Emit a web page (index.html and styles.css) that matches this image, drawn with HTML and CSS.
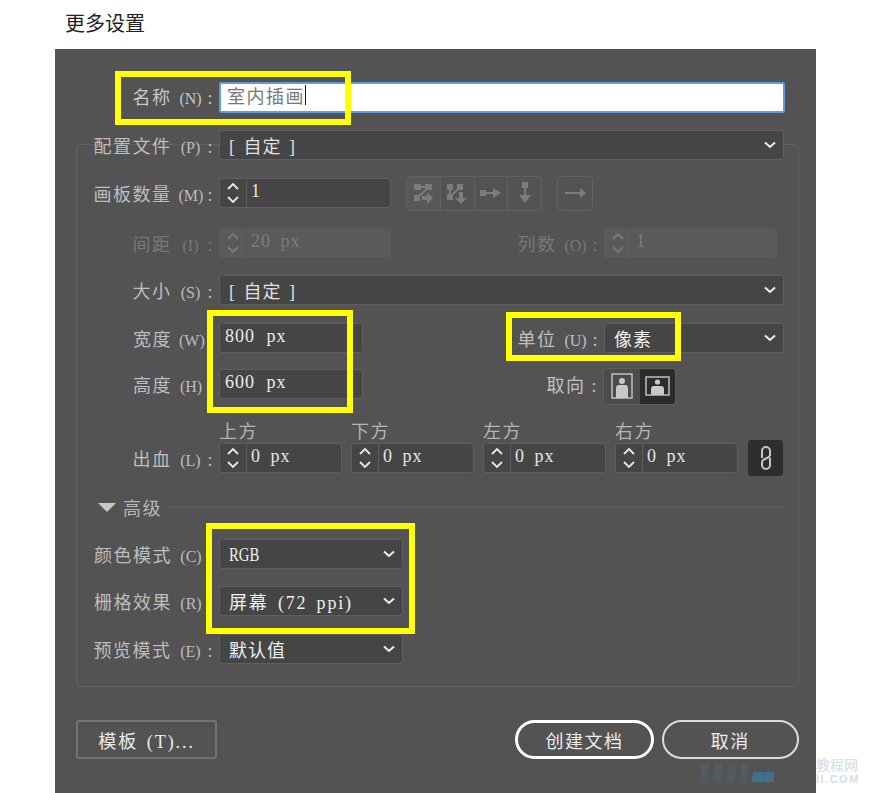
FILE: index.html
```html
<!DOCTYPE html>
<html lang="zh">
<head>
    <meta charset="UTF-8">
    <title>更多设置</title>
    <link rel="stylesheet" href="styles.css">
</head>
<body>
    <svg class="defs" width="0" height="0">
        <symbol id="updown" viewBox="0 0 14 24">
            <path d="M2 8 L7 3 L12 8 M2 16 L7 21 L12 16" fill="none" stroke="currentColor" stroke-width="1.8"/>
        </symbol>
        <symbol id="chev" viewBox="0 0 12 8">
            <path d="M1 1.5 L6 6 L11 1.5" fill="none" stroke="currentColor" stroke-width="2"/>
        </symbol>
    </svg>

    <h1 class="title">更多设置</h1>

    <div class="dialog">
        <!-- name -->
        <div class="row row-name">
            <label class="label">名称<span class="key">(N)</span>:</label>
            <div class="name-input"><span>室内插画</span><i class="caret"></i></div>
        </div>

        <div class="group">
            <div class="row row-first">
                <label class="label">配置文件<span class="key">(P)</span>:</label>
                <div class="field select grow"><span class="bracket">[ 自定 ]</span><svg class="chev"><use href="#chev"/></svg></div>
            </div>

            <div class="row row-count">
                <label class="label">画板数量<span class="key">(M)</span>:</label>
                <div class="field stepper w-172">
                    <span class="step"><svg><use href="#updown"/></svg></span><span class="val">1</span>
                </div>
                <div class="tools">
                    <span class="tool">
                        <svg viewBox="0 0 28 28"><path d="M5 5h7v6H5zM16 5h7v6h-7zM5 16h6v6H5zM13 17h5v-4l6 6-6 6v-4h-5z"/><path class="ln" d="M12 8h4M17 11 L10 17"/></svg>
                    </span>
                    <span class="tool">
                        <svg viewBox="0 0 28 28"><path d="M4 5h6v6H4zM4 15h6v6H4zM14 5h6v6h-6zM16 13h4v6h4l-6 6-6-6h4z"/><path class="ln" d="M7 11v4M15 10 L9 16"/></svg>
                    </span>
                    <span class="tool">
                        <svg viewBox="0 0 28 28"><path d="M3 11h6v6H3zM9 13h7v-4l8 5-8 5v-4H9z"/></svg>
                    </span>
                    <span class="tool">
                        <svg viewBox="0 0 28 28"><path d="M11 3h6v6h-6zM13 9h2v7h5l-6 8-6-8h5z"/></svg>
                    </span>
                </div>
                <span class="tool tool-single">
                    <svg viewBox="0 0 28 28"><path d="M4 13h15v-4l6 5-6 5v-4H4z"/></svg>
                </span>
            </div>

            <div class="row row-space dim">
                <label class="label">间距<span class="key">(I)</span>:</label>
                <div class="field stepper w-172 off">
                    <span class="step"><svg><use href="#updown"/></svg></span><span class="val">20 px</span>
                </div>
                <label class="label label-cols">列数<span class="key">(O)</span>:</label>
                <div class="field stepper w-173 off">
                    <span class="step"><svg><use href="#updown"/></svg></span><span class="val">1</span>
                </div>
            </div>

            <div class="row row-size">
                <label class="label">大小<span class="key">(S)</span>:</label>
                <div class="field select grow"><span class="bracket">[ 自定 ]</span><svg class="chev"><use href="#chev"/></svg></div>
            </div>

            <div class="row row-width">
                <label class="label label-bare">宽度<span class="key">(W)</span></label>
                <div class="field w-144"><span class="val val-plain">800 px</span></div>
                <label class="label label-unit">单位<span class="key">(U)</span>:</label>
                <div class="field select w-180"><span class="strong">像素</span><svg class="chev"><use href="#chev"/></svg></div>
            </div>

            <div class="row row-height">
                <label class="label label-bare">高度<span class="key">(H)</span></label>
                <div class="field w-144"><span class="val val-plain">600 px</span></div>
                <label class="label label-orient">取向 :</label>
                <div class="orient">
                    <span class="orient-btn">
                        <svg viewBox="0 0 22 26" width="22" height="26"><rect x="1" y="1" width="20" height="24" fill="none" stroke="#c8c8c8" stroke-width="1.4"/><circle cx="11" cy="8" r="3" fill="#c8c8c8"/><path d="M5 25v-10q0-3 3-3h6q3 0 3 3v10z" fill="#c8c8c8"/></svg>
                    </span>
                    <span class="orient-btn on">
                        <svg viewBox="0 0 25 20" width="25" height="20"><rect x="1" y="1" width="23" height="18" fill="none" stroke="#c8c8c8" stroke-width="1.4"/><circle cx="12.500" cy="6" r="2.600" fill="#c8c8c8"/><path d="M6 19v-6q0-3 3-3h7q3 0 3 3v6z" fill="#c8c8c8"/></svg>
                    </span>
                </div>
            </div>

            <div class="row row-bleed">
                <label class="label">出血<span class="key">(L)</span>:</label>
                <div class="bleed">
                    <span class="cap">上方</span>
                    <div class="field stepper w-123"><span class="step"><svg><use href="#updown"/></svg></span><span class="val">0 px</span></div>
                </div>
                <div class="bleed">
                    <span class="cap">下方</span>
                    <div class="field stepper w-123"><span class="step"><svg><use href="#updown"/></svg></span><span class="val">0 px</span></div>
                </div>
                <div class="bleed">
                    <span class="cap">左方</span>
                    <div class="field stepper w-123"><span class="step"><svg><use href="#updown"/></svg></span><span class="val">0 px</span></div>
                </div>
                <div class="bleed">
                    <span class="cap">右方</span>
                    <div class="field stepper w-123"><span class="step"><svg><use href="#updown"/></svg></span><span class="val">0 px</span></div>
                </div>
                <span class="link">
                    <svg viewBox="0 0 14 28" width="14" height="28"><path d="M3 14V7a4 4 0 0 1 8 0v4q0 2-4 3.500t-4 3.500v3a4 4 0 0 0 8 0v-7" fill="none" stroke="#c8c8c8" stroke-width="2"/></svg>
                </span>
            </div>

            <div class="adv">
                <i class="tri"></i><span class="adv-text">高级</span><i class="adv-line"></i>
            </div>

            <div class="row row-color">
                <label class="label label-bare">颜色模式<span class="key">(C)</span></label>
                <div class="field select w-184"><span class="strong rgb">RGB</span><svg class="chev"><use href="#chev"/></svg></div>
            </div>
            <div class="row row-raster">
                <label class="label label-bare">栅格效果<span class="key">(R)</span></label>
                <div class="field select w-184"><span class="strong wide">屏幕 (72 ppi)</span><svg class="chev"><use href="#chev"/></svg></div>
            </div>
            <div class="row row-preview">
                <label class="label">预览模式<span class="key">(E)</span>:</label>
                <div class="field select w-184"><span class="strong">默认值</span><svg class="chev"><use href="#chev"/></svg></div>
            </div>
        </div>

        <div class="actions">
            <button class="btn btn-tpl">模板 (T)...</button>
            <button class="btn btn-pill btn-primary">创建文档</button>
            <button class="btn btn-pill">取消</button>
        </div>

        <!-- yellow annotations drawn over the dialog -->
        <div class="mark mark-name"></div>
        <div class="mark mark-size"></div>
        <div class="mark mark-unit"></div>
        <div class="mark mark-color"></div>
    </div>

    <!-- faded watermark -->
    <div class="wm">
        <svg class="wm-logo" viewBox="0 0 78 20" width="78" height="20"><path d="M5 0h8l-3 20H2zM18 0h8l-3 20h-8zM32 0h8l-3 20h-8zM45 0h7l-3 20h-7z" fill="#4f6672" opacity=".45"/><path d="M56 9h10v10H55zM67 9h10v10H66z" fill="#3f7189"/></svg>
        <div class="wm-text"><span>教程网</span><span class="wm-en">II.COM</span></div>
    </div>
</body>
</html>
```

FILE: styles.css
```css
html, body {
    margin: 0;
    height: 793px;
    overflow: hidden;
    background: #fff;
}
body {
    position: relative;
    font-family: "Liberation Serif", "Noto Sans CJK SC", serif;
    color: #c4c4c4;
    font-size: 18px;
}
.defs {
    position: absolute;
}
.title {
    margin: 0;
    height: 49px;
    padding: 9px 0 0 65px;
    box-sizing: border-box;
    font-family: "Noto Sans CJK SC", sans-serif;
    font-size: 20px;
    line-height: 27px;
    font-weight: 400;
    color: #222;
}
.dialog {
    position: relative;
    margin-left: 55px;
    width: 761px;
    height: 744px;
    box-sizing: border-box;
    padding: 33px 17px 0 21px;
    background: #535353;
}
.row {
    display: flex;
    align-items: center;
    height: 30px;
}
.label {
    width: 143px;
    flex: none;
    box-sizing: border-box;
    padding: 4px 5px 0 0;
    text-align: right;
    white-space: nowrap;
    letter-spacing: 1.5px;
    line-height: 30px;
    color: #bdbdbd;
}
.label-bare {
    padding-right: 16px;
}
.key {
    display: inline-block;
    width: 24px;
    margin: 0 5px 0 7px;
    font-size: 16px;
    letter-spacing: 0;
    text-align: center;
}
.label-bare .key {
    margin-right: 0;
}
.row-name {
    height: 31px;
}
.row-name .label {
    padding-top: 2px;
    color: #c8c8c8;
}
.name-input {
    width: 566px;
    height: 31px;
    margin-right: -1px;
    box-sizing: border-box;
    display: flex;
    align-items: center;
    padding: 0 0 6px 6px;
    background: #fff;
    border: 2px solid #5d9ce0;
    border-radius: 2px;
    color: #777;
    letter-spacing: 1.5px;
}
.caret {
    width: 1px;
    height: 20px;
    background: #111;
}

/* group box */
.group {
    margin-top: 31px;
    width: 723px;
    height: 543px;
    box-sizing: border-box;
    border: 1px solid #626262;
    border-radius: 5px;
}
.group .row {
    margin-right: 14px;
    margin-left: -1px;
}
.row-first { margin-top: -15px; }
.row-count { margin-top: 18px; }
.row-space { margin-top: 20px; }
.row-size { margin-top: 17px; }
.row-width { margin-top: 18px; }
.row-height { margin-top: 16px; }
.row-bleed { margin-top: 44px; }
.row-color { margin-top: 0; }
.row-raster { margin-top: 17px; }
.row-preview { margin-top: 18px; }

.field {
    height: 30px;
    box-sizing: border-box;
    display: flex;
    align-items: center;
    flex: none;
    background: #454545;
    border: 1px solid #5f5f5f;
    border-radius: 3px;
    color: #e6e6e6;
    letter-spacing: 1px;
}
.grow { flex: 1; }
.w-144 { width: 144px; }
.w-172 { width: 172px; }
.w-173 { width: 173px; }
.w-180 { width: 180px; }
.w-184 { width: 184px; }
.w-123 { width: 123px; }
.select {
    justify-content: space-between;
    padding: 0 7px 0 9px;
}
.chev {
    width: 12px;
    height: 8px;
    color: #f0f0f0;
    flex: none;
}
.bracket {
    color: #e0e0e0;
    word-spacing: 2px;
}
.strong {
    color: #efefef;
    white-space: nowrap;
    word-spacing: 4px;
}
.rgb {
    letter-spacing: 0;
    padding-top: 3px;
    transform: scaleX(0.82);
    transform-origin: left;
}
.wide {
    letter-spacing: 1.8px;
    word-spacing: 3px;
}
.step {
    width: 26px;
    height: 100%;
    flex: none;
    display: flex;
    align-items: center;
    justify-content: center;
    border-right: 1px solid #5f5f5f;
    color: #e8e8e8;
}
.step svg {
    width: 14px;
    height: 24px;
}
.val {
    padding: 0 0 3px 4px;
    white-space: nowrap;
    word-spacing: 4px;
}
.val-plain {
    padding-left: 5px;
    word-spacing: 6px;
    color: #ececec;
}

/* disabled row */
.dim .label {
    color: #787878;
}
.label-cols {
    margin-left: 77px;
    width: 136px;
}
.off {
    background: #5a5a5a;
    border-color: #5a5a5a;
    color: #7a7a7a;
}
.off .step {
    border-color: #555;
    color: #7a7a7a;
}

.tools {
    margin-left: 15px;
    width: 136px;
    height: 35px;
    display: flex;
    border: 1px solid #616161;
    border-radius: 4px;
    box-sizing: border-box;
}
.tool {
    flex: 1;
    box-sizing: border-box;
    display: flex;
    align-items: center;
    justify-content: center;
    border-left: 1px solid #616161;
}
.tool:first-child {
    border-left: none;
    background: #585858;
}
.tool svg {
    width: 28px;
    height: 28px;
    fill: #7c7c7c;
}
.tool .ln {
    fill: none;
    stroke: #7c7c7c;
    stroke-width: 2;
}
.tool-single {
    flex: none;
    margin-left: 15px;
    width: 36px;
    height: 35px;
    border: 1px solid #616161;
    border-radius: 4px;
}

.label-unit {
    margin-left: 98px;
    color: #c0c0c0;
}
.label-orient {
    margin-left: 97px;
    color: #c0c0c0;
}
.orient {
    height: 37px;
    margin-top: 4px;
    display: flex;
    box-sizing: border-box;
    border: 1px solid #5f5f5f;
    border-radius: 3px;
}
.orient-btn {
    width: 36px;
    display: flex;
    align-items: center;
    justify-content: center;
    background: #4c4c4c;
}
.orient-btn.on {
    width: 35px;
    background: #2c2c2c;
    border-radius: 0 3px 3px 0;
}

.bleed {
    position: relative;
    margin-right: 9px;
}
.cap {
    position: absolute;
    left: 0;
    top: -22px;
    line-height: 22px;
    letter-spacing: 1.5px;
    color: #b4b4b4;
}
.link {
    margin-left: 1px;
    width: 35px;
    height: 36px;
    display: flex;
    align-items: center;
    justify-content: center;
    background: #2e2e2e;
    border-radius: 3px;
}

.adv {
    display: flex;
    align-items: center;
    height: 30px;
    margin: 19px 14px 17px 21px;
    color: #b8b8b8;
}
.tri {
    width: 0;
    height: 0;
    border-left: 9px solid transparent;
    border-right: 9px solid transparent;
    border-top: 9px solid #c8c8c8;
    margin-right: 7px;
}
.adv-text {
    letter-spacing: 1.5px;
}
.adv-line {
    flex: 1;
    height: 1px;
    margin-left: 6px;
    background: #5e5e5e;
}

.actions {
    display: flex;
    align-items: center;
    margin-top: 33px;
}
.btn {
    height: 39px;
    box-sizing: border-box;
    font: inherit;
    letter-spacing: 1.5px;
    color: #ececec;
    background: transparent;
}
.btn-tpl {
    width: 142px;
    padding: 0;
    border: 2px solid #737373;
    border-radius: 3px;
    letter-spacing: 2px;
    word-spacing: 2px;
}
.btn-pill {
    width: 138px;
    margin-left: 8px;
    border: 2px solid #dcdcdc;
    border-radius: 20px;
}
.btn-primary {
    width: 139px;
    margin-left: 298px;
    border: 3px solid #fff;
}

/* yellow boxes */
.mark {
    position: absolute;
    box-sizing: border-box;
    border: 6px solid #ffff00;
    pointer-events: none;
}
.mark-name { left: 60px; top: 22px; width: 236px; height: 54px; }
.mark-size { left: 152px; top: 261px; width: 146px; height: 103px; }
.mark-unit { left: 451px; top: 263px; width: 175px; height: 49px; }
.mark-color { left: 151px; top: 474px; width: 209px; height: 111px; }

/* watermark */
.wm {
    position: absolute;
    left: 697px;
    top: 755px;
    display: flex;
    align-items: flex-start;
    font-family: "Noto Sans CJK SC", sans-serif;
}
.wm-logo {
    margin-top: 8px;
    flex: none;
}
.wm-text {
    display: flex;
    flex-direction: column;
    margin-left: 41px;
    width: 44px;
    color: #d5dfe7;
    font-size: 14px;
    line-height: 18px;
    font-weight: 500;
}
.wm-en {
    font-family: "Liberation Sans", sans-serif;
    font-size: 11px;
    line-height: 11px;
    margin-top: 1px;
    font-weight: 700;
    letter-spacing: 1.5px;
}
```
